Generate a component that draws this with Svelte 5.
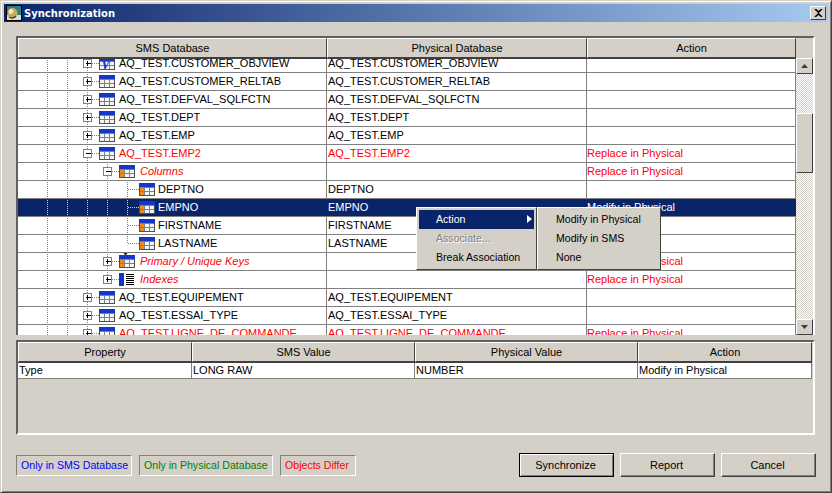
<script>
	// depth: 0 = table row, 1 = folder row, 2 = column row
	// open: '+', '-' or '' for the expander box
	const rows = [
		{ name: 'AQ_TEST.CUSTOMER_OBJVIEW', phys: 'AQ_TEST.CUSTOMER_OBJVIEW', action: '', depth: 0, open: '+', icon: 'view' },
		{ name: 'AQ_TEST.CUSTOMER_RELTAB', phys: 'AQ_TEST.CUSTOMER_RELTAB', action: '', depth: 0, open: '+', icon: 'table' },
		{ name: 'AQ_TEST.DEFVAL_SQLFCTN', phys: 'AQ_TEST.DEFVAL_SQLFCTN', action: '', depth: 0, open: '+', icon: 'table' },
		{ name: 'AQ_TEST.DEPT', phys: 'AQ_TEST.DEPT', action: '', depth: 0, open: '+', icon: 'table' },
		{ name: 'AQ_TEST.EMP', phys: 'AQ_TEST.EMP', action: '', depth: 0, open: '+', icon: 'table' },
		{ name: 'AQ_TEST.EMP2', phys: 'AQ_TEST.EMP2', action: 'Replace in Physical', depth: 0, open: '-', icon: 'table', diff: true },
		{ name: 'Columns', phys: '', action: 'Replace in Physical', depth: 1, open: '-', icon: 'column', diff: true, italic: true },
		{ name: 'DEPTNO', phys: 'DEPTNO', action: '', depth: 2, open: '', icon: 'column' },
		{ name: 'EMPNO', phys: 'EMPNO', action: 'Modify in Physical', depth: 2, open: '', icon: 'column', selected: true },
		{ name: 'FIRSTNAME', phys: 'FIRSTNAME', action: '', depth: 2, open: '', icon: 'column' },
		{ name: 'LASTNAME', phys: 'LASTNAME', action: '', depth: 2, open: '', icon: 'column', last: true },
		{ name: 'Primary / Unique Keys', phys: '', action: 'Replace in Physical', depth: 1, open: '+', icon: 'key', diff: true, italic: true },
		{ name: 'Indexes', phys: '', action: 'Replace in Physical', depth: 1, open: '+', icon: 'index', diff: true, italic: true, last: true },
		{ name: 'AQ_TEST.EQUIPEMENT', phys: 'AQ_TEST.EQUIPEMENT', action: '', depth: 0, open: '+', icon: 'table' },
		{ name: 'AQ_TEST.ESSAI_TYPE', phys: 'AQ_TEST.ESSAI_TYPE', action: '', depth: 0, open: '+', icon: 'table' },
		{ name: 'AQ_TEST.LIGNE_DE_COMMANDE', phys: 'AQ_TEST.LIGNE_DE_COMMANDE', action: 'Replace in Physical', depth: 0, open: '+', icon: 'table', diff: true }
	];

	const BOX_X = [65.5, 85.5];
	const ICON_X = [81, 101, 121];

	function guideLines(row) {
		const lines = [29.5, 49.5, 69.5];
		if (row.depth >= 1) lines.push(89.5);
		return lines;
	}
</script>

{#snippet tableIcon(kind)}
	<svg class="icon" width="16" height="13" viewBox="0 0 16 13" shape-rendering="crispEdges">
		{#if kind === 'index'}
			<rect x="0" y="0" width="16" height="13" fill="#fff" />
			<rect x="0" y="0" width="5" height="13" fill="#1338c8" />
			<path d="M7 1.5h8M7 3.5h8M7 5.5h8M7 7.5h8M7 9.5h8M7 11.5h8" stroke="#000" fill="none" />
		{:else}
			<rect x="0" y="0" width="16" height="13" fill="#f4f4f4" />
			<rect x="0" y="0" width="16" height="4" fill="#1338c8" />
			{#if kind !== 'table' && kind !== 'view'}
				<rect x="0" y="4" width="5" height="9" fill="#f08a10" />
			{/if}
			<path d="M5.5 4v9M10.5 4v9M0 4.5h16M0 8.5h16" stroke="#808080" fill="none" />
			<path d="M.5 4v9M15.5 4v9M0 12.5h16" stroke="#505050" fill="none" />
			{#if kind === 'view'}
				<text x="2" y="12" class="vglyph">V</text>
			{/if}
		{/if}
	</svg>
{/snippet}

<div class="dialog">
	<div class="titlebar">
		<svg class="appicon" width="16" height="16" viewBox="0 0 16 16">
			<rect width="16" height="16" fill="#000" />
			<rect x="1" y="1" width="14" height="14" fill="#2f7f7a" />
			<rect x="1" y="10" width="14" height="5" fill="#cfe6d8" />
			<circle cx="6.5" cy="8" r="5" fill="#c9a860" />
			<circle cx="5" cy="6.5" r="2.4" fill="#f0e8c8" />
			<path d="M3 12a5 5 0 0 0 7-1" stroke="#4a3a20" stroke-width="1.4" fill="none" />
		</svg>
		<span class="title">Synchronization</span>
		<button class="closebtn" aria-label="Close">
			<svg width="9" height="8" viewBox="0 0 9 8"><path d="M1 0l3.5 3.2L8 0M1 8l3.5-3.2L8 8" stroke="#000" stroke-width="1.6" fill="none" /></svg>
		</button>
	</div>

	<div class="content">
		<div class="treepanel">
			<div class="treemain">
				<div class="head treehead">
					<div class="hcell c1">SMS Database</div>
					<div class="hcell c2">Physical Database</div>
					<div class="hcell c3">Action</div>
				</div>
				<div class="viewport">
					<div class="rows">
						{#each rows as row}
							<div class="row" class:diff={row.diff} class:selected={row.selected}>
								<div class="cell c1 tree">
									<svg class="guides" width="135" height="18" viewBox="0 0 135 18" shape-rendering="crispEdges">
										{#each guideLines(row) as x}
											<path d="M{x} {row.depth === 1 && row.last && x === 89.5 ? '0v10' : '0v18'}" class="dots" />
										{/each}
										{#if row.depth === 2}
											<path d="M109.5 0v{row.last ? 9.5 : 18}M110 9.5h11" class="dots" />
										{:else}
											<path d="M{BOX_X[row.depth] + 8} 9.5h7" class="dots" />
										{/if}
										{#if row.open}
											{@const bx = BOX_X[row.depth]}
											<rect x={bx} y="5.5" width="8" height="8" fill="#fff" stroke="#808080" />
											<path d="M{bx + 2} 9.5h5" stroke="#000" />
											{#if row.open === '+'}
												<path d="M{bx + 4} 7v5" stroke="#000" />
											{/if}
										{/if}
									</svg>
									<div class="treeitem" style="padding-left:{ICON_X[row.depth]}px">
										<div class="iconwrap">
											{#if row.icon === 'key'}
												<svg class="keymark" width="7" height="4" viewBox="0 0 7 4"><path d="M0 0h7M1 1h5L3.5 4z" fill="#000" stroke="#000" stroke-width=".6" /></svg>
											{/if}
											{@render tableIcon(row.icon)}
										</div>
										<span class="label" class:italic={row.italic} class:lv2={row.depth === 2}>{row.name}</span>
									</div>
								</div>
								<div class="cell c2">{row.phys}</div>
								<div class="cell c3">{row.action}</div>
							</div>
						{/each}
					</div>
				</div>
			</div>
			<div class="scrollbar">
				<div class="sbtn"><svg width="7" height="4" viewBox="0 0 7 4"><path d="M3.5 0L7 4H0z" fill="#3a3a3a" /></svg></div>
				<div class="track short"></div>
				<div class="thumb"></div>
				<div class="track"></div>
				<div class="sbtn"><svg width="7" height="4" viewBox="0 0 7 4"><path d="M0 0h7L3.5 4z" fill="#3a3a3a" /></svg></div>
			</div>

			<div class="menu">
				<div class="mitem active">Action<span class="arrow"></span></div>
				<div class="mitem disabled">Associate...</div>
				<div class="mitem">Break Association</div>
			</div>
			<div class="menu sub">
				<div class="mitem">Modify in Physical</div>
				<div class="mitem">Modify in SMS</div>
				<div class="mitem">None</div>
			</div>
		</div>

		<div class="proppanel">
			<div class="head prophead">
				<div class="hcell p1">Property</div>
				<div class="hcell p2">SMS Value</div>
				<div class="hcell p3">Physical Value</div>
				<div class="hcell p4">Action</div>
			</div>
			<div class="prow">
				<div class="cell p1">Type</div>
				<div class="cell p2">LONG RAW</div>
				<div class="cell p3">NUMBER</div>
				<div class="cell p4">Modify in Physical</div>
			</div>
		</div>

		<div class="footer">
			<div class="legend blue">Only in SMS Database</div>
			<div class="legend green">Only in Physical Database</div>
			<div class="legend red">Objects Differ</div>
			<div class="spacer"></div>
			<button class="btn default">Synchronize</button>
			<button class="btn">Report</button>
			<button class="btn">Cancel</button>
		</div>
	</div>
</div>

<style>
	:global(body) {
		margin: 0;
		background: #d4d0c8;
		font-family: 'Liberation Sans', Arial, sans-serif;
		font-size: 11px;
		color: #000;
	}
	.dialog {
		width: 832px;
		height: 493px;
		box-sizing: border-box;
		background: #d4d0c8;
		border: 1px solid;
		border-color: #d4d0c8 #404040 #404040 #d4d0c8;
		box-shadow: inset 1px 1px 0 #fff, inset -1px -1px 0 #808080;
		padding: 3px 3px 0 3px;
		display: flex;
		flex-direction: column;
	}
	.titlebar {
		height: 18px;
		flex: none;
		display: flex;
		align-items: center;
		padding: 0 2px 0 2px;
		background: linear-gradient(90deg, #0a246a, #a6caf0);
		color: #fff;
	}
	.appicon {
		flex: none;
		margin: 0 2px 0 0;
	}
	.title {
		font-family: 'DejaVu Sans', 'Liberation Sans', sans-serif;
		font-weight: bold;
		font-size: 10px;
		flex: 1;
	}
	.closebtn {
		width: 16px;
		height: 14px;
		padding: 0;
		border: 1px solid;
		border-color: #fff #404040 #404040 #fff;
		background: #d4d0c8;
		display: flex;
		align-items: center;
		justify-content: center;
	}
	.content {
		flex: 1;
		min-height: 0;
		padding: 14px 12px 0 12px;
		display: flex;
		flex-direction: column;
	}
	.treepanel {
		position: relative;
		height: 299px;
		flex: none;
		display: flex;
		box-sizing: border-box;
		border: 2px solid;
		border-color: #606060 #fff #fff #606060;
		border-bottom: 0;
		margin-right: 1px;
	}
	.treemain {
		width: 778px;
		flex: none;
		background: #fff;
		display: flex;
		flex-direction: column;
	}
	.head {
		display: flex;
		flex: none;
		background: #d4d0c8;
	}
	.treehead {
		height: 20px;
	}
	.hcell {
		box-sizing: border-box;
		display: flex;
		align-items: center;
		justify-content: center;
		border: 1px solid;
		border-color: #fff #404040 #404040 #fff;
		color: #000;
		font-size: 11px;
	}
	.c1 {
		width: 309px;
		flex: none;
	}
	.c2 {
		width: 260px;
		flex: none;
	}
	.c3 {
		width: 209px;
		flex: none;
	}
	.viewport {
		flex: 1;
		min-height: 0;
		overflow: hidden;
		border-top: 1px solid #404040;
	}
	.rows {
		margin-top: -4px;
	}
	.row {
		display: flex;
		height: 18px;
		box-sizing: border-box;
		border-bottom: 1px solid #808080;
	}
	.cell {
		box-sizing: border-box;
		height: 100%;
		line-height: 17px;
		padding-left: 1px;
		border-right: 1px solid #808080;
		white-space: nowrap;
		overflow: hidden;
	}
	.cell.c3 {
		padding-left: 0;
	}
	.tree {
		position: relative;
		padding-left: 0;
	}
	.guides {
		position: absolute;
		left: 0;
		top: -1px;
	}
	.dots {
		stroke: #808080;
		stroke-dasharray: 1 1;
		fill: none;
	}
	.treeitem {
		position: relative;
		display: flex;
		align-items: center;
		height: 17px;
	}
	.iconwrap {
		position: relative;
		width: 16px;
		height: 13px;
		flex: none;
		margin-right: 4px;
	}
	.icon {
		display: block;
	}
	.keymark {
		position: absolute;
		left: 3px;
		top: -4px;
	}
	.vglyph {
		font-family: 'Liberation Serif', serif;
		font-style: italic;
		font-weight: bold;
		font-size: 14px;
		fill: #1338c8;
	}
	.label.lv2 {
		margin-left: -1px;
	}
	.label.italic {
		font-style: italic;
		margin-left: 1px;
	}
	.row.diff {
		color: #f00;
	}
	.row.selected {
		background: #0a246a;
		color: #fff;
	}
	.row.selected .cell {
		border-right-color: #0a246a;
	}
	.row.selected .dots {
		stroke: #d4d0c8;
	}
	.scrollbar {
		flex: 1;
		display: flex;
		flex-direction: column;
		padding-top: 20px;
		background: #d4d0c8;
		box-sizing: border-box;
	}
	.sbtn {
		height: 16px;
		flex: none;
		box-sizing: border-box;
		display: flex;
		align-items: center;
		justify-content: center;
		background: #d4d0c8;
		border: 1px solid;
		border-color: #fff #404040 #404040 #fff;
	}
	.track {
		flex: 1;
		background-color: #fff;
		background-image: conic-gradient(#d4d0c8 25%, #fff 0 50%, #d4d0c8 0 75%, #fff 0);
		background-size: 2px 2px;
	}
	.track.short {
		flex: none;
		height: 39px;
	}
	.thumb {
		height: 60px;
		flex: none;
		box-sizing: border-box;
		background: #d4d0c8;
		border: 1px solid;
		border-color: #fff #404040 #404040 #fff;
	}
	.menu {
		position: absolute;
		left: 398px;
		top: 169px;
		width: 121px;
		box-sizing: border-box;
		padding: 2px;
		background: #d4d0c8;
		border: 1px solid;
		border-color: #fff #404040 #404040 #fff;
		font-size: 10.6px;
		z-index: 2;
	}
	.menu.sub {
		left: 519px;
		width: 124px;
		z-index: 3;
	}
	.menu.sub .mitem {
		padding-left: 16px;
	}
	.mitem {
		position: relative;
		height: 19px;
		line-height: 19px;
		padding-left: 17px;
		white-space: nowrap;
	}
	.mitem.active {
		background: #0a246a;
		color: #fff;
	}
	.mitem.disabled {
		color: #808080;
		text-shadow: 1px 1px 0 #fff;
	}
	.arrow {
		position: absolute;
		right: 2px;
		top: 5px;
		border-left: 5px solid #fff;
		border-top: 4px solid transparent;
		border-bottom: 4px solid transparent;
	}
	.proppanel {
		margin-top: 5px;
		margin-right: 1px;
		height: 95px;
		flex: none;
		box-sizing: border-box;
		border: 2px solid;
		border-color: #606060 #fff #fff #606060;
		display: flex;
		flex-direction: column;
	}
	.prophead {
		height: 20px;
	}
	.prow {
		display: flex;
		height: 17px;
		background: #fff;
		border-top: 1px solid #404040;
		border-bottom: 1px solid #808080;
		box-sizing: border-box;
		width: 794px;
	}
	.p1 {
		width: 174px;
		flex: none;
	}
	.p2 {
		width: 223px;
		flex: none;
	}
	.p3 {
		width: 223px;
		flex: none;
	}
	.p4 {
		width: 174px;
		flex: none;
	}
	.prow .cell {
		line-height: 15px;
	}
	.footer {
		margin-top: 18px;
		display: flex;
		align-items: center;
		height: 24px;
	}
	.legend {
		box-sizing: border-box;
		height: 21px;
		line-height: 19px;
		padding: 0 4px;
		margin-right: 7px;
		border: 1px solid;
		border-color: #808080 #fff #fff #808080;
		white-space: nowrap;
		font-size: 10.6px;
	}
	.blue {
		color: #00f;
		width: 116px;
	}
	.green {
		color: #007f00;
		width: 134px;
	}
	.red {
		color: #f00;
		width: 76px;
	}
	.spacer {
		flex: 1;
	}
	.btn {
		width: 95px;
		height: 24px;
		margin-left: 6px;
		padding: 0 2px 0 0;
		background: #d4d0c8;
		font-family: inherit;
		font-size: 11px;
		color: #000;
		border: 1px solid;
		border-color: #fff #404040 #404040 #fff;
		box-shadow: inset -1px -1px 0 #808080;
	}
	.btn.default {
		border-color: #000;
		box-shadow: inset 1px 1px 0 #fff, inset -1px -1px 0 #808080;
	}
</style>
